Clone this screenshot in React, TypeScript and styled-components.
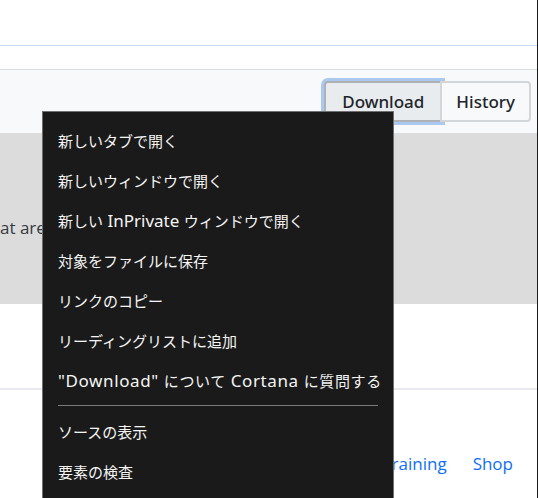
import React from "react";
import styled, { createGlobalStyle } from "styled-components";

const Global = createGlobalStyle`
  html, body { margin: 0; padding: 0; background: #ffffff; }
  body { font-family: "Noto Sans", "Open Sans", sans-serif; overflow: hidden; }
`;

const Page = styled.div`
  position: relative;
  width: 537px;
  height: 498px;
  border-right: 1px solid #1b1b1b;
  overflow: hidden;
  background: #ffffff;
`;

const TopBar = styled.div`
  height: 45px;
  border-bottom: 1px solid #c9dcf1;
`;

const SubBar = styled.div`
  height: 23px;
  border-bottom: 1px solid #dcdcdc;
`;

const Toolbar = styled.div`
  height: 63px;
  background: #f8f9fa;
  display: flex;
  justify-content: flex-end;
  align-items: flex-start;
  padding: 11px 6px 0 0;
  box-sizing: border-box;
`;

const Group = styled.div`
  display: flex;
`;

const Btn = styled.button<{ $active?: boolean; $first?: boolean }>`
  position: relative;
  height: 41px;
  padding: 0 ${(p) => (p.$first ? "16px" : "14px")};
  font-family: "Noto Sans", sans-serif;
  font-size: 17px;
  font-weight: 500;
  color: #212529;
  background: ${(p) => (p.$active ? "#e9ecef" : "#f8f9fa")};
  border: 2px solid ${(p) => (p.$active ? "#aeb1b5" : "#d3d6d9")};
  border-radius: ${(p) => (p.$first ? "4px 0 0 4px" : "0 4px 4px 0")};
  margin-left: ${(p) => (p.$first ? "0" : "-2px")};
  box-shadow: ${(p) => (p.$active ? "0 0 0 3px #abc9ee" : "none")};
  z-index: ${(p) => (p.$active ? 0 : 1)};
`;

const Band = styled.div`
  height: 171px;
  background: #dcdcdc;
  display: flex;
  align-items: center;
  padding-top: 18px;
  box-sizing: border-box;
`;

const BandText = styled.p`
  margin: 0;
  font-family: "Open Sans", sans-serif;
  font-size: 17px;
  color: #343a40;
`;

const Spacer = styled.div`
  height: 84px;
  border-bottom: 2px solid #ebe9f0;
`;

const Footer = styled.nav`
  display: flex;
  justify-content: flex-end;
  gap: 26px;
  padding: 62px 24px 0 0;
`;

const FootLink = styled.a`
  font-family: "Open Sans", sans-serif;
  font-size: 17px;
  color: #0d6efd;
  text-decoration: none;
`;

const Menu = styled.ul`
  position: absolute;
  left: 42px;
  top: 111px;
  width: 352px;
  height: 400px;
  margin: 0;
  padding: 8px 0 0;
  box-sizing: border-box;
  list-style: none;
  background: #1a1a1a;
  border: 1px solid #6f6f6f;
  z-index: 5;
`;

const Item = styled.li<{ $spread?: boolean }>`
  height: 40px;
  display: flex;
  align-items: center;
  padding-left: 15px;
  font-family: "Noto Sans CJK JP", "Noto Sans", sans-serif;
  font-size: 15px;
  color: #f5f5f5;
  white-space: pre;
  letter-spacing: ${(p) => (p.$spread ? "0.6px" : "0")};
`;

const Latin = styled.span`
  font-family: "Noto Sans", "Open Sans", sans-serif;
  font-size: 17px;
`;

const Sep = styled.li`
  height: 1px;
  margin: 5px 15px 5px 15px;
  background: #7b7b7b;
`;

export default function App() {
  return (
    <>
      <Global />
      <Page>
        <TopBar />
        <SubBar />
        <Toolbar>
          <Group>
            <Btn $active $first>Download</Btn>
            <Btn>History</Btn>
          </Group>
        </Toolbar>
        <Band>
          <BandText>at are listed</BandText>
        </Band>
        <Spacer />
        <Footer>
          <FootLink href="#">Training</FootLink>
          <FootLink href="#">Shop</FootLink>
        </Footer>
        <Menu>
          <Item>新しいタブで開く</Item>
          <Item>新しいウィンドウで開く</Item>
          <Item>
            新しい<Latin> InPrivate </Latin>ウィンドウで開く
          </Item>
          <Item>対象をファイルに保存</Item>
          <Item>リンクのコピー</Item>
          <Item>リーディングリストに追加</Item>
          <Item $spread>
            <Latin>"Download" </Latin>について<Latin> Cortana </Latin>に質問する
          </Item>
          <Sep />
          <Item>ソースの表示</Item>
          <Item>要素の検査</Item>
        </Menu>
      </Page>
    </>
  );
}
